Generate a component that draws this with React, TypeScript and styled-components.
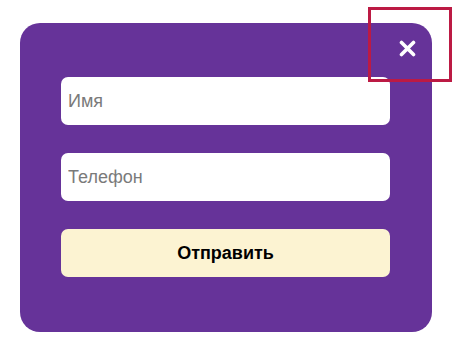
import React from "react";
import styled, { createGlobalStyle } from "styled-components";

const Global = createGlobalStyle`
  html, body { margin: 0; padding: 0; background: #ffffff; }
  body { font-family: "Liberation Sans", Arial, sans-serif; }
  * { box-sizing: border-box; }
`;

const Page = styled.div`
  padding: 23px 0 0 20px;
`;

const Panel = styled.form`
  position: relative;
  width: 412px;
  height: 309px;
  background: #663399;
  border-radius: 20px;
  padding: 54px 42px 0 41px;
  display: flex;
  flex-direction: column;
  gap: 28px;
`;

const CloseButton = styled.button`
  position: absolute;
  top: 15px;
  right: 15px;
  width: 20px;
  height: 20px;
  padding: 0;
  border: none;
  background: transparent;
  display: flex;
  align-items: center;
  justify-content: center;
  cursor: pointer;
`;

const Highlight = styled.div`
  position: absolute;
  left: 348px;
  top: -16px;
  width: 84px;
  height: 75px;
  border: 3px solid #bc1a44;
  pointer-events: none;
`;

const Field = styled.input`
  width: 100%;
  height: 48px;
  border: none;
  border-radius: 7px;
  background: #ffffff;
  padding: 0 7px;
  font-family: "Liberation Sans", Arial, sans-serif;
  font-size: 18px;
  color: #222;
  outline: none;
  &::placeholder { color: #7a7a7a; }
`;

const Submit = styled.button`
  width: 100%;
  height: 48px;
  border: none;
  border-radius: 7px;
  background: #fcf3d2;
  font-family: "Liberation Sans", Arial, sans-serif;
  font-weight: bold;
  font-size: 18px;
  color: #000;
  cursor: pointer;
`;

export default function App() {
  return (
    <>
      <Global />
      <Page>
        <Panel onSubmit={(e) => e.preventDefault()}>
          <CloseButton type="button" aria-label="Закрыть">
            <svg width="17" height="17" viewBox="0 0 17 17">
              <path d="M2.5 2.5 L14.5 14.5 M14.5 2.5 L2.5 14.5" stroke="#ffffff" strokeWidth="3.6" strokeLinecap="round" />
            </svg>
          </CloseButton>
          <Highlight />
          <Field placeholder="Имя" />
          <Field placeholder="Телефон" />
          <Submit type="submit">Отправить</Submit>
        </Panel>
      </Page>
    </>
  );
}
